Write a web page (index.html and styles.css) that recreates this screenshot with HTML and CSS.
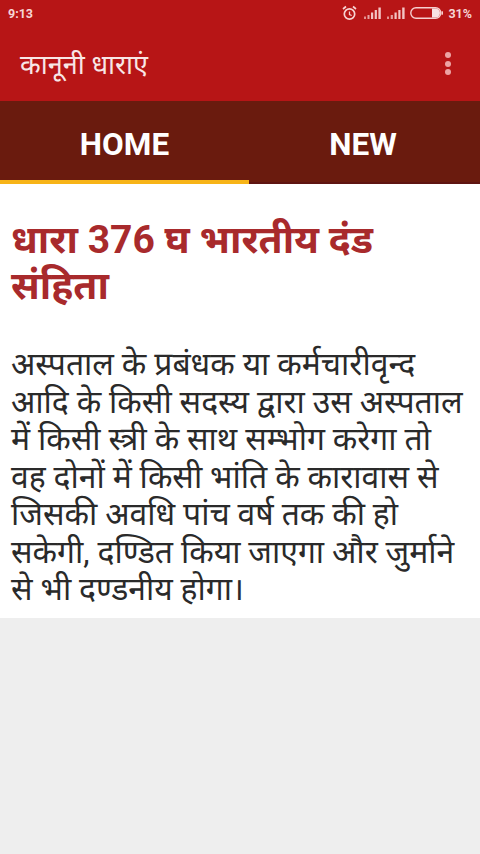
FILE: index.html
```html
<!DOCTYPE html>
<html lang="hi">
<head>
<meta charset="utf-8">
<title>कानूनी धाराएं</title>
<link rel="stylesheet" href="styles.css">
</head>
<body>
<div class="screen">
  <header class="appbar">
    <div class="status">
      <span class="time">9:13</span>
      <div class="status-icons">
        <svg class="alarm" width="15" height="16" viewBox="0 0 15 16" fill="none" stroke="#f7d3d3" stroke-width="1.7"><circle cx="7.500" cy="9" r="5.200"/><path d="M7.500 6.500v3l2.200 1" stroke-width="1.300"/><path d="M1 4l3-2.500M14 4l-3-2.500"/></svg>
        <svg class="signal first" width="17" height="12" viewBox="0 0 17 12" fill="#f3c4c4"><rect x="0" y="9.500" width="2" height="2.500" opacity=".7"/><rect x="3.500" y="8" width="2" height="4" opacity=".8"/><rect x="7" y="5.500" width="2.200" height="6.500"/><rect x="10.700" y="3" width="2.200" height="9"/><rect x="14.400" y="0.500" width="2.400" height="11.500"/></svg>
        <svg class="signal" width="18" height="12" viewBox="0 0 18 12" fill="#f3c4c4"><rect x="0" y="9.500" width="2" height="2.500" opacity=".7"/><rect x="3.700" y="8" width="2.200" height="4" opacity=".8"/><rect x="7.500" y="5.500" width="2.200" height="6.500"/><rect x="11.300" y="3" width="2.200" height="9"/><rect x="15.200" y="0.500" width="2.400" height="11.500"/></svg>
        <svg class="battery" width="33" height="12" viewBox="0 0 33 12"><rect x="0.800" y="0.800" width="30" height="10.400" rx="5.200" fill="none" stroke="#f6cfcf" stroke-width="1.400"/><path d="M22 1.500h3.500a4.500 4.500 0 0 1 0 9h-3.500z" fill="#f8e2e2"/><rect x="31.500" y="4.300" width="1.500" height="3.400" fill="#f6cfcf"/></svg>
        <span class="pct">31%</span>
      </div>
    </div>
    <div class="toolbar">
      <span class="app-title">कानूनी धाराएं</span>
      <div class="menu"><i></i><i></i><i></i></div>
    </div>
  </header>
  <nav class="tabs">
    <div class="tab active">HOME</div>
    <div class="tab">NEW</div>
  </nav>
  <main class="content">
    <h1 class="heading">धारा 376 घ भारतीय दंड संहिता</h1>
    <p class="body-text">अस्पताल के प्रबंधक या कर्मचारीवृन्द आदि के किसी सदस्य द्वारा उस अस्पताल में किसी स्त्री के साथ सम्भोग करेगा तो वह दोनों में किसी भांति के कारावास से जिसकी अवधि पांच वर्ष तक की हो सकेगी, दण्डित किया जाएगा और जुर्माने से भी दण्डनीय होगा।</p>
  </main>
</div>
</body>
</html>
```
FILE: styles.css
```css
* { box-sizing: border-box; }
html, body { margin: 0; padding: 0; height: 100%; }
body { background: #eeeeee; font-family: Roboto, "Noto Sans", "Noto Sans Devanagari", sans-serif; }
.screen { width: 480px; height: 854px; display: flex; flex-direction: column; background: #eeeeee; overflow: hidden; }
.appbar { background: #b71516; height: 101px; display: flex; flex-direction: column; }
.status { height: 26px; display: flex; justify-content: space-between; align-items: center; padding: 0 8px; color: #f6d5d5; font-size: 12.500px; font-weight: 700; }
.status-icons { display: flex; align-items: center; gap: 5px; }
.status-icons .signal.first { margin-left: 2px; margin-right: 1px; }
.status-icons .pct { margin-left: 0; font-size: 12.500px; }
.toolbar { flex: 1; display: flex; justify-content: space-between; align-items: center; padding: 0 29px 0 20px; }
.app-title { color: #f8e6e6; font-size: 27px; }
.menu { display: flex; flex-direction: column; gap: 2.500px; }
.menu i { display: block; width: 6px; height: 6px; border-radius: 50%; background: #eda4a4; }
.tabs { display: flex; height: 83px; background: #6a1b0e; }
.tab { flex: 0 0 231px; display: flex; align-items: center; justify-content: center; color: #fff; font-size: 31.500px; font-weight: 700; padding: 8px 3px 2px 0; border-bottom: 2px solid #5e1512; }
.tab.active { flex-basis: 249px; padding: 8px 0 0; border-bottom: 4px solid #f7b417; }
.content { background: #fff; padding: 34px 11px 0; height: 434px; }
.heading { margin: 0 0 37px; color: #a82a2c; font-size: 39px; line-height: 45.500px; font-weight: 700; }
.body-text { margin: 0; color: #2a2a2a; font-size: 31.900px; line-height: 37.500px; }
```
